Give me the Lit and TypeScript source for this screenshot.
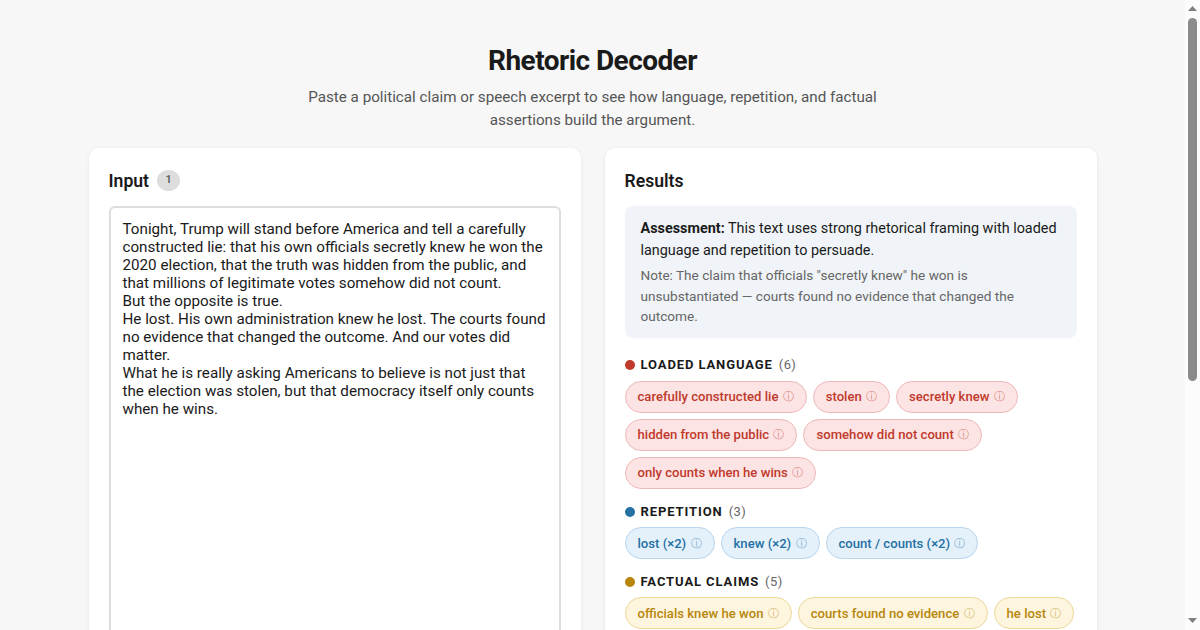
import { LitElement, html, css } from "lit";
import { customElement } from "lit/decorators.js";

const TEXT = `Tonight, Trump will stand before America and tell a carefully constructed lie: that his own officials secretly knew he won the 2020 election, that the truth was hidden from the public, and that millions of legitimate votes somehow did not count.
But the opposite is true.
He lost. His own administration knew he lost. The courts found no evidence that changed the outcome. And our votes did matter.
What he is really asking Americans to believe is not just that the election was stolen, but that democracy itself only counts when he wins.`;

const GROUPS = [
  { key: "red", name: "Loaded language", items: ["carefully constructed lie", "stolen", "secretly knew", "hidden from the public", "somehow did not count", "only counts when he wins"] },
  { key: "blue", name: "Repetition", items: ["lost (×2)", "knew (×2)", "count / counts (×2)"] },
  { key: "gold", name: "Factual claims", items: ["officials knew he won", "courts found no evidence", "he lost", "votes did matter", "2020 election"] },
];

@customElement("app-root")
export class AppRoot extends LitElement {
  static styles = css`
    :host { display: block; background: #f7f7f7; font-family: Roboto, "Liberation Sans", sans-serif; color: #1a1a1a; padding-right: 15px; }
    .bar { position: fixed; top: 0; right: 0; bottom: 0; width: 15px; background: #fcfcfc; display: flex; flex-direction: column; align-items: center; }
    .arrow { width: 15px; height: 17px; flex: none; display: block; fill: #7f7f7f; }
    .track { flex: 1; width: 100%; display: flex; flex-direction: column; align-items: center; padding-top: 1px; }
    .thumb { width: 9px; height: 363px; background: #8b8b8b; border-radius: 5px; }
    .page { box-sizing: border-box; max-width: 1040px; margin: 0 auto; padding: 44px 16px 40px; }
    header { text-align: center; margin-bottom: 16px; }
    h1 { margin: 0 0 8px; font-size: 28px; line-height: 34px; font-weight: 700; letter-spacing: -0.56px; }
    .sub { margin: 0 auto; max-width: 600px; font-size: 15.2px; line-height: 22.8px; color: #555; }
    .cols { display: grid; grid-template-columns: 1fr 1fr; gap: 24px; align-items: stretch; }
    .card { background: #fff; border-radius: 10px; padding: 20px; box-shadow: 0 1px 4px rgba(0,0,0,.08); }
    h2 { margin: 0 0 13px; padding-top: 1px; font-size: 17.6px; line-height: 24px; font-weight: 600; display: flex; align-items: center; gap: 8px; }
    .step { display: inline-flex; align-items: center; justify-content: center; width: 23px; height: 21px; border-radius: 50%; background: #ddd; color: #555; font-size: 11px; font-weight: 500; padding-bottom: 2px; box-sizing: border-box; }
    textarea { display: block; box-sizing: border-box; width: 100%; height: 771px; border: 2px solid #ddd; border-radius: 6px; padding: 12px; margin: 0; font: 15.2px Roboto, "Liberation Sans", sans-serif; color: #1a1a1a; resize: vertical; outline: none; background: #fff; overflow: hidden; }
    .assess { background: #f0f4f8; border-radius: 8px; padding: 12px 16px 11.4px; margin-bottom: 18.4px; font-size: 14.4px; line-height: 22px; }
    .note { margin-top: 3.6px; font-size: 13.6px; line-height: 20.4px; color: #666; }
    .group { margin-bottom: 14px; }
    .head { display: flex; align-items: center; gap: 6px; font-size: 13px; line-height: 18px; margin-bottom: 6.42px; }
    .dot { width: 10px; height: 10px; border-radius: 50%; flex: none; }
    .label { font-weight: 700; letter-spacing: 0.9px; text-transform: uppercase; color: #1a1a1a; }
    .count { font-weight: 400; color: #666; letter-spacing: 0.4px; }
    .pills { display: flex; flex-wrap: wrap; gap: 6px; }
    .pill { box-sizing: border-box; display: inline-flex; align-items: center; gap: 4.3px; height: 32px; padding: 0 12px; border-radius: 16px; border: 1px solid; font-size: 13.12px; font-weight: 500; white-space: nowrap; }
    .i { font-size: 11px; font-weight: 400; opacity: .55; font-family: "DejaVu Sans", sans-serif; }
    .red .dot { background: #c0392b; }
    .blue .dot { background: #2471a3; }
    .gold .dot { background: #b7860b; }
    .red .pill { background: #fce4e4; border-color: #efb9b9; color: #c0392b; }
    .blue .pill { background: #e4f0fa; border-color: #b8d6ef; color: #2471a3; }
    .gold .pill { background: #fdf5de; border-color: #ecd79b; color: #b7860b; }
  `;

  render() {
    return html`<div class="page">
      <header>
        <h1>Rhetoric Decoder</h1>
        <p class="sub">Paste a political claim or speech excerpt to see how language, repetition, and factual assertions build the argument.</p>
      </header>
      <div class="cols">
        <section class="card">
          <h2>Input <span class="step">1</span></h2>
          <textarea .value=${TEXT}></textarea>
        </section>
        <section class="card">
          <h2>Results</h2>
          <div class="assess">
            <div><strong>Assessment:</strong> This text uses strong rhetorical framing with loaded language and repetition to persuade.</div>
            <div class="note">Note: The claim that officials "secretly knew" he won is unsubstantiated — courts found no evidence that changed the outcome.</div>
          </div>
          ${GROUPS.map(g => html`<div class="group ${g.key}">
            <div class="head"><span class="dot"></span><span class="label">${g.name}</span><span class="count">(${g.items.length})</span></div>
            <div class="pills">${g.items.map(t => html`<span class="pill">${t} <span class="i">ⓘ</span></span>`)}</div>
          </div>`)}
        </section>
      </div>
    </div>
    <div class="bar" aria-hidden="true">
      <svg class="arrow" viewBox="0 0 15 17"><path d="M7.5 6 L12 11 H3 Z"/></svg>
      <div class="track"><div class="thumb"></div></div>
      <svg class="arrow" viewBox="0 0 15 17"><path d="M3 5 H12 L7.5 10 Z"/></svg>
    </div>`;
  }
}
